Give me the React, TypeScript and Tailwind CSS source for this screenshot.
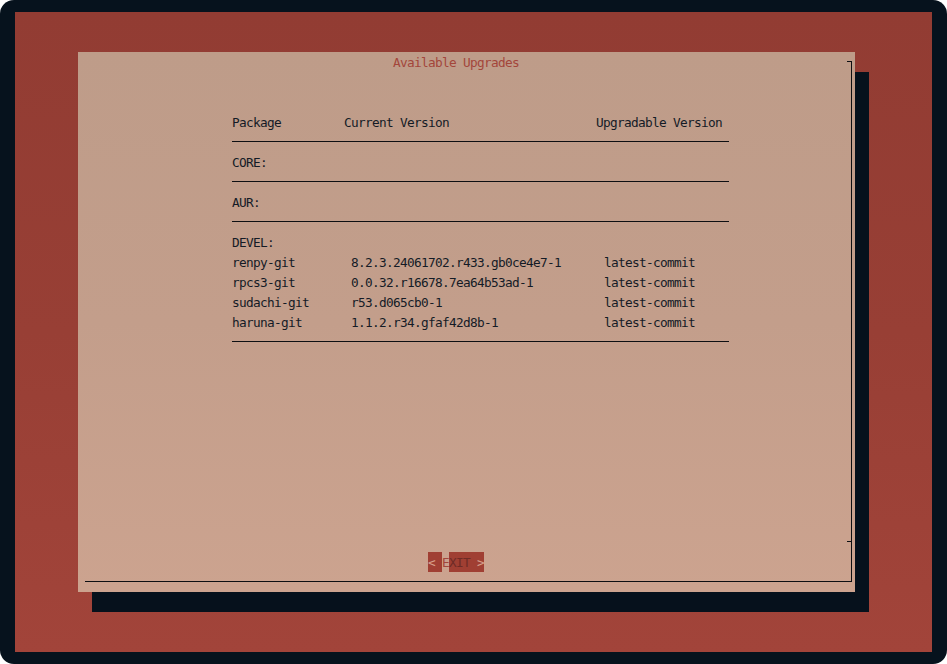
const rows = [
  { name: 'renpy-git', current: '8.2.3.24061702.r433.gb0ce4e7-1', next: 'latest-commit' },
  { name: 'rpcs3-git', current: '0.0.32.r16678.7ea64b53ad-1', next: 'latest-commit' },
  { name: 'sudachi-git', current: 'r53.d065cb0-1', next: 'latest-commit' },
  { name: 'haruna-git', current: '1.1.2.r34.gfaf42d8b-1', next: 'latest-commit' },
];

function Rule() {
  return (
    <div className="h-5 pt-[9px]">
      <div className="h-px bg-[#0e0f12]" />
    </div>
  );
}

function Section({ label }: { label: string }) {
  return <div className="h-5 leading-[21px]">{label}</div>;
}

export default function App() {
  return (
    <div
      className="w-[947px] h-[664px] bg-[#06121d] rounded-[14px] pt-[12px] pl-[15px] pr-[15px] pb-[12px] text-[#141b26] text-[12.75px] tracking-[-0.68px]"
      style={{ fontFamily: '"DejaVu Sans Mono", "Liberation Mono", monospace' }}
    >
      <div className="w-[917px] h-[640px] bg-gradient-to-b from-[#923c33] via-[#983f35] to-[#a2443a] pt-[40px] pl-[63px]">
        <div className="w-[777px] h-[540px] bg-gradient-to-b from-[#be9c89] via-[#c39e8b] to-[#cca38f] shadow-[14px_20px_0_0_#06111c] pt-[9px] pl-[7px]">
          <div className="relative flow-root w-[767px] h-[521px] border-r border-b border-[#0e0f12]">
            <div className="absolute right-0 top-0 w-[4px] h-px bg-[#0e0f12]" />
            <div className="absolute right-0 top-[480px] w-[4px] h-px bg-[#0e0f12]" />

            <div className="-mt-[9px] h-5 leading-[21px] pl-[308px] text-[#a3463b]">Available Upgrades</div>
            <div className="h-10" />

            <div className="ml-[147px] w-[497px]">
              <div className="flex h-5 leading-[21px]">
                <span className="w-[112px]">Package</span>
                <span className="w-[252px]">Current Version</span>
                <span>Upgradable Version</span>
              </div>
              <Rule />
              <Section label="CORE:" />
              <Rule />
              <Section label="AUR:" />
              <Rule />
              <Section label="DEVEL:" />
              {rows.map((r) => (
                <div key={r.name} className="flex h-5 leading-[21px]">
                  <span className="w-[119px]">{r.name}</span>
                  <span className="w-[253px]">{r.current}</span>
                  <span>{r.next}</span>
                </div>
              ))}
              <Rule />
            </div>

            <div className="h-[200px]" />

            <div className="flex h-5 leading-[21px] ml-[343px]">
              <span className="w-[14px] bg-[#a03f33] text-[#d6a08c]">&lt;</span>
              <span className="w-[7px] text-[#a3463b]">E</span>
              <span className="flex w-[35px] bg-[#a03f33]">
                <span className="w-[28px] text-[#6e2b26]">XIT</span>
                <span className="text-[#d6a08c]">&gt;</span>
              </span>
            </div>
          </div>
        </div>
      </div>
    </div>
  );
}
